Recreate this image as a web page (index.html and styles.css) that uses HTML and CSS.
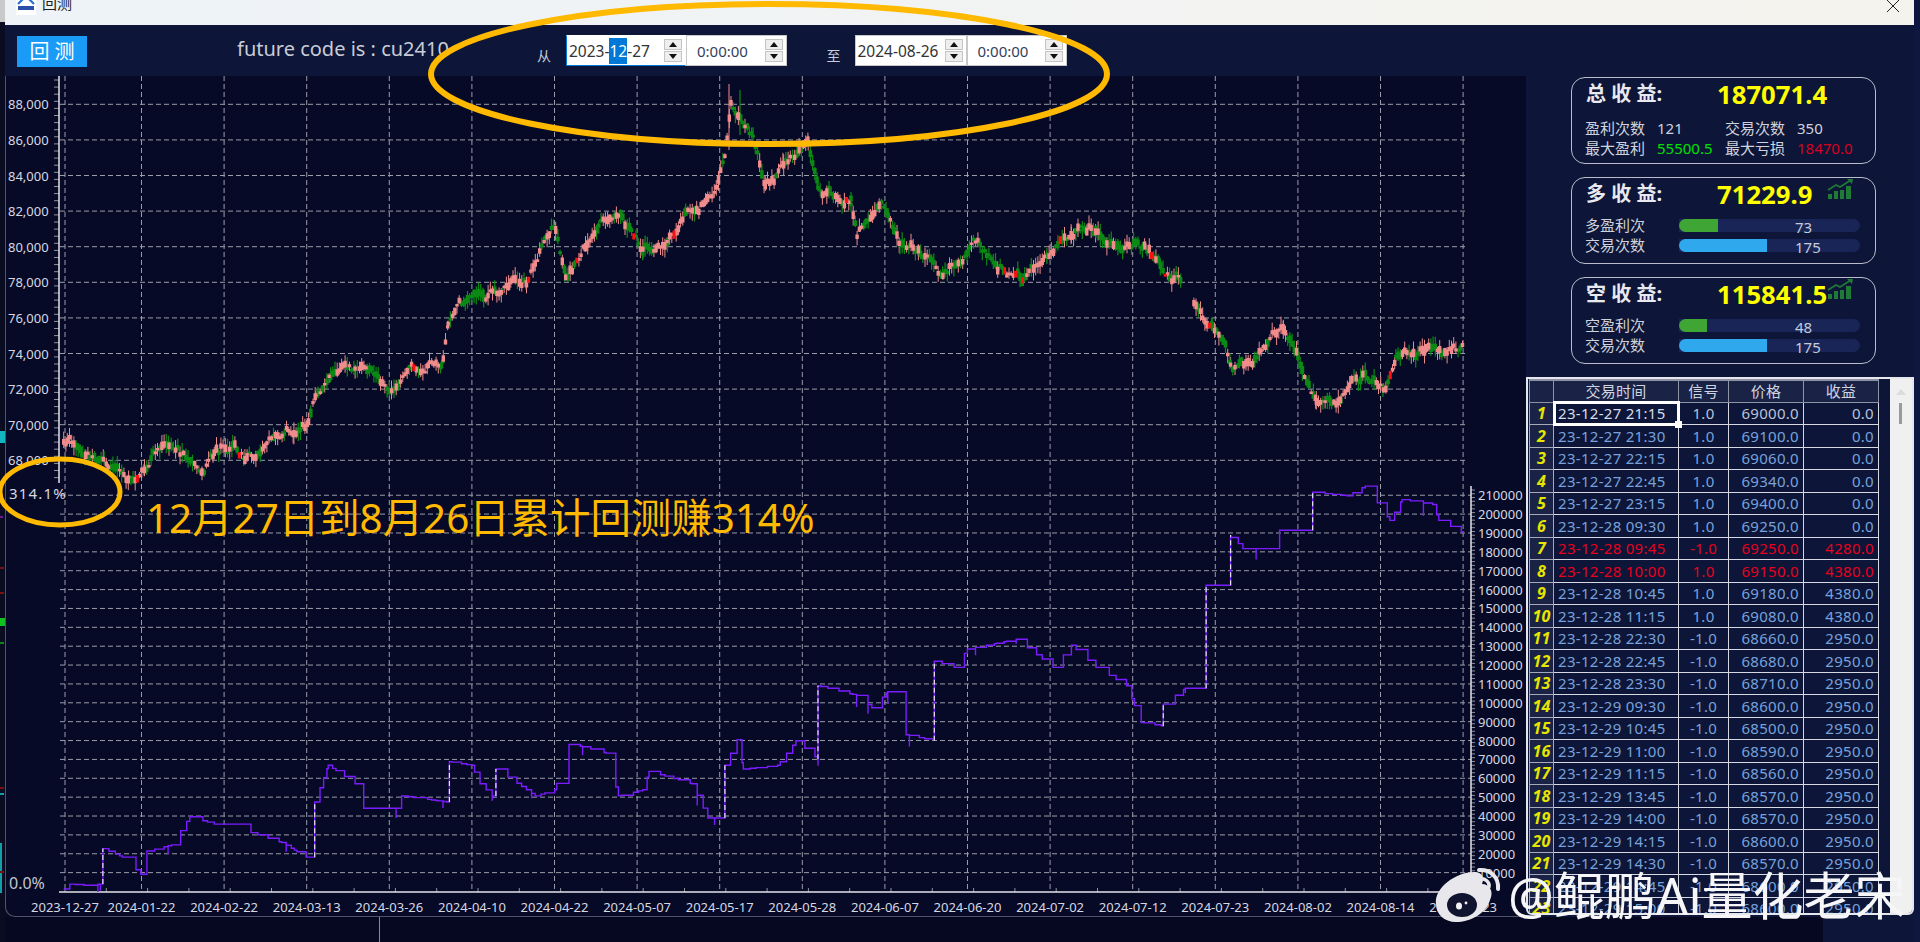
FILE: index.html
```html
<!DOCTYPE html>
<html lang="zh-CN">
  <head>
    <meta charset="UTF-8" />
    <title>回测</title>
    <link rel="stylesheet" href="styles.css">
  </head>
  <body>
    <div class="page">
      <svg class="edge-left" viewBox="0 0 5 942">
        <rect x="0" y="0" width="5" height="22" fill="#c9c9c9" />
        <rect x="0" y="431" width="5" height="12" fill="#12b5c0" />
        <rect x="0" y="516" width="3" height="2" fill="#6a1a90" />
        <rect x="0" y="567" width="4" height="2" fill="#7a1010" />
        <rect x="0" y="592" width="4" height="2" fill="#7a1010" />
        <rect x="0" y="618" width="5" height="8" fill="#10c020" />
        <rect x="0" y="642" width="4" height="2" fill="#0a8a14" />
        <rect x="0" y="787" width="4" height="2" fill="#7a1010" />
        <rect x="0" y="793" width="4" height="2" fill="#12a0a8" />
        <rect x="0" y="843" width="2" height="50" fill="#12a0a8" />
        <rect x="0" y="871" width="4" height="2" fill="#7a1010" />
      </svg>

      <div class="window">
        <div class="titlebar">
          <svg class="app-icon" viewBox="0 0 20 20">
            <rect width="20" height="20" fill="#fff" />
            <path d="M2 9 L10 1 L18 9" fill="none" stroke="#2f6fd0" stroke-width="2.2" />
            <rect x="2" y="11" width="16" height="4" fill="#2a4fa8" />
          </svg>
          <span class="app-title">回测</span>
          <svg class="close-icon" viewBox="0 0 12 12">
            <path d="M0 0 L12 12 M12 0 L0 12" stroke="#222" stroke-width="1" />
          </svg>
        </div>

        <div class="content">
          <div class="main">
            <div class="toolbar">
              <button class="run-button">回 测</button>
              <span class="code-label">future code is : cu2410</span>
              <span class="range-label range-from">从</span>
              <div class="field field-date field-focus">
                <span>2023-<em>12</em>-27</span>
                <div class="spin"><i class="up"></i><i class="down"></i></div>
              </div>
              <div class="field field-time">
                <span>0:00:00</span>
                <div class="spin"><i class="up"></i><i class="down"></i></div>
              </div>
              <span class="range-label range-to">至</span>
              <div class="field field-date">
                <span>2024-08-26</span>
                <div class="spin"><i class="up"></i><i class="down"></i></div>
              </div>
              <div class="field field-time">
                <span>0:00:00</span>
                <div class="spin"><i class="up"></i><i class="down"></i></div>
              </div>
            </div>
            <div class="chart">
              <svg id="chart" viewBox="5 76 1521 841"></svg>
            </div>
          </div>

          <div class="side">
            <div class="card">
              <div class="card-head">
                <span class="card-title">总 收 益:</span>
                <span class="card-value">187071.4</span>
              </div>
              <div class="stats">
                <span>盈利次数</span><span>121</span><span>交易次数</span><span>350</span>
                <span>最大盈利</span><span class="gain">55500.5</span><span>最大亏损</span><span class="loss">18470.0</span>
              </div>
            </div>

            <div class="card">
              <div class="card-head">
                <span class="card-title">多 收 益:</span>
                <span class="card-value">71229.9</span>
                <svg class="trend-icon" viewBox="0 0 27 22">
                  <path d="M1 20h4v-5H1zM7 20h4v-8H7zM13 20h4v-9h-4zM19 20h5V7h-5z" fill="#1f7a36" />
                  <path d="M1 11 L9 6 L13 8 L24 1" fill="none" stroke="#1f7a36" stroke-width="1.6" />
                  <path d="M20 0 L26 0 L25 5 Z" fill="#1f7a36" />
                </svg>
              </div>
              <div class="bars">
                <span>多盈利次</span>
                <div class="bar"><div class="fill fill-green" style="width: 39px"></div><b class="bar-num">73</b></div>
                <span>交易次数</span>
                <div class="bar"><div class="fill fill-blue" style="width: 88px"></div><b class="bar-num">175</b></div>
              </div>
            </div>

            <div class="card">
              <div class="card-head">
                <span class="card-title">空 收 益:</span>
                <span class="card-value">115841.5</span>
                <svg class="trend-icon" viewBox="0 0 27 22">
                  <path d="M1 20h4v-5H1zM7 20h4v-8H7zM13 20h4v-9h-4zM19 20h5V7h-5z" fill="#1f7a36" />
                  <path d="M1 11 L9 6 L13 8 L24 1" fill="none" stroke="#1f7a36" stroke-width="1.6" />
                  <path d="M20 0 L26 0 L25 5 Z" fill="#1f7a36" />
                </svg>
              </div>
              <div class="bars">
                <span>空盈利次</span>
                <div class="bar"><div class="fill fill-green" style="width: 28px"></div><b class="bar-num">48</b></div>
                <span>交易次数</span>
                <div class="bar"><div class="fill fill-blue" style="width: 88px"></div><b class="bar-num">175</b></div>
              </div>
            </div>

            <div class="trades">
              <table>
                <thead>
                  <tr><th class="num"></th><th class="c-time">交易时间</th><th class="c-sig">信号</th><th class="c-price">价格</th><th class="c-pnl">收益</th></tr>
                </thead>
                <tbody>
                  <tr><th>1</th><td class="selected">23-12-27 21:15<i class="handle"></i></td><td class="mid first">1.0</td><td class="first">69000.0</td><td class="first">0.0</td></tr>
                  <tr><th>2</th><td>23-12-27 21:30</td><td class="mid">1.0</td><td>69100.0</td><td>0.0</td></tr>
                  <tr><th>3</th><td>23-12-27 22:15</td><td class="mid">1.0</td><td>69060.0</td><td>0.0</td></tr>
                  <tr><th>4</th><td>23-12-27 22:45</td><td class="mid">1.0</td><td>69340.0</td><td>0.0</td></tr>
                  <tr><th>5</th><td>23-12-27 23:15</td><td class="mid">1.0</td><td>69400.0</td><td>0.0</td></tr>
                  <tr><th>6</th><td>23-12-28 09:30</td><td class="mid">1.0</td><td>69250.0</td><td>0.0</td></tr>
                  <tr class="red"><th>7</th><td>23-12-28 09:45</td><td class="mid">-1.0</td><td>69250.0</td><td>4280.0</td></tr>
                  <tr class="red"><th>8</th><td>23-12-28 10:00</td><td class="mid">1.0</td><td>69150.0</td><td>4380.0</td></tr>
                  <tr><th>9</th><td>23-12-28 10:45</td><td class="mid">1.0</td><td>69180.0</td><td>4380.0</td></tr>
                  <tr><th>10</th><td>23-12-28 11:15</td><td class="mid">1.0</td><td>69080.0</td><td>4380.0</td></tr>
                  <tr><th>11</th><td>23-12-28 22:30</td><td class="mid">-1.0</td><td>68660.0</td><td>2950.0</td></tr>
                  <tr><th>12</th><td>23-12-28 22:45</td><td class="mid">-1.0</td><td>68680.0</td><td>2950.0</td></tr>
                  <tr><th>13</th><td>23-12-28 23:30</td><td class="mid">-1.0</td><td>68710.0</td><td>2950.0</td></tr>
                  <tr><th>14</th><td>23-12-29 09:30</td><td class="mid">-1.0</td><td>68600.0</td><td>2950.0</td></tr>
                  <tr><th>15</th><td>23-12-29 10:45</td><td class="mid">-1.0</td><td>68500.0</td><td>2950.0</td></tr>
                  <tr><th>16</th><td>23-12-29 11:00</td><td class="mid">-1.0</td><td>68590.0</td><td>2950.0</td></tr>
                  <tr><th>17</th><td>23-12-29 11:15</td><td class="mid">-1.0</td><td>68560.0</td><td>2950.0</td></tr>
                  <tr><th>18</th><td>23-12-29 13:45</td><td class="mid">-1.0</td><td>68570.0</td><td>2950.0</td></tr>
                  <tr><th>19</th><td>23-12-29 14:00</td><td class="mid">-1.0</td><td>68570.0</td><td>2950.0</td></tr>
                  <tr><th>20</th><td>23-12-29 14:15</td><td class="mid">-1.0</td><td>68600.0</td><td>2950.0</td></tr>
                  <tr><th>21</th><td>23-12-29 14:30</td><td class="mid">-1.0</td><td>68570.0</td><td>2950.0</td></tr>
                  <tr><th>22</th><td>23-12-29 14:45</td><td class="mid">-1.0</td><td>68600.0</td><td>2950.0</td></tr>
                  <tr><th>23</th><td>23-12-29 15:00</td><td class="mid">-1.0</td><td>68600.0</td><td>2950.0</td></tr>
                </tbody>
              </table>
              <div class="scrollbar"><i class="scroll-up"></i><i class="scroll-thumb"></i></div>
            </div>
          </div>
        </div>

        <div class="footer"><i class="stray-line"></i><i class="footer-right"></i></div>
      </div>

      <div class="edge-right"></div>

      <!-- marks drawn over the screenshot -->
      <svg class="overlay" viewBox="0 0 1920 942">
        <ellipse cx="769" cy="74" rx="338" ry="70" fill="none" stroke="#ffb900" stroke-width="6" />
        <ellipse cx="60" cy="492" rx="60" ry="33" fill="none" stroke="#ffb900" stroke-width="5" />
        <g class="weibo">
          <path d="M1436 904 C1434 888 1456 872 1474 872 C1484 872 1484 880 1482 884 C1490 884 1494 892 1490 900 C1486 914 1470 922 1456 922 C1444 922 1436 914 1436 904 Z" fill="#e8e8ec" />
          <ellipse cx="1462" cy="905" rx="15" ry="12" fill="#10142e" />
          <ellipse cx="1459" cy="906" rx="3" ry="3.5" fill="#f4f4f6" />
          <circle cx="1466" cy="903" r="1.4" fill="#f4f4f6" />
          <path d="M1479 870 C1490 869 1499 877 1498 889" fill="none" stroke="#e8e8ec" stroke-width="4" stroke-linecap="round" />
          <path d="M1480 879 C1485 878 1490 882 1489 887" fill="none" stroke="#e8e8ec" stroke-width="3.5" stroke-linecap="round" />
        </g>
      </svg>
      <div class="note">12月27日到8月26日累计回测赚314%</div>
      <div class="watermark">@鲲鹏Ai量化老宋</div>
    </div>
    <script src="chart.js"></script>
  </body>
</html>
```

FILE: styles.css
```css
* {
  box-sizing: border-box;
}
body {
  margin: 0;
  background: #0a0d22;
  font-family: "Noto Sans", "Noto Sans CJK SC", sans-serif;
}
.page {
  position: relative;
  display: flex;
  width: 1920px;
  height: 942px;
  overflow: hidden;
}
.edge-left {
  width: 5px;
  height: 942px;
  flex: none;
  background: #0a0d22;
}
.edge-right {
  width: 6px;
  flex: none;
  background: #0e1740;
}
.window {
  flex: 1;
  display: flex;
  flex-direction: column;
}

.titlebar {
  height: 25px;
  flex: none;
  display: flex;
  align-items: flex-start;
  background: linear-gradient(90deg, #eef3f8, #f5f3ee);
  overflow: hidden;
}
.app-icon {
  width: 20px;
  height: 20px;
  margin: -5px 0 0 11px;
}
.app-title {
  margin: -8px 0 0 6px;
  font-size: 15px;
  line-height: 22px;
  color: #222;
}
.close-icon {
  width: 12px;
  height: 12px;
  margin: 0 15px 0 auto;
}

.content {
  height: 892px;
  flex: none;
  display: flex;
}
.main {
  width: 1521px;
  flex: none;
  display: flex;
  flex-direction: column;
}

.toolbar {
  height: 51px;
  flex: none;
  display: flex;
  align-items: flex-start;
  padding: 10px 0 0 12px;
  background: #0d1638;
}
.run-button {
  width: 70px;
  height: 31px;
  margin-top: 1px;
  padding: 0;
  border: none;
  background: #1a9bf7;
  color: #fff;
  font-family: inherit;
  font-size: 20px;
  line-height: 28px;
}
.code-label {
  width: 215px;
  margin-left: 150px;
  font-size: 20px;
  line-height: 28px;
  color: #c9ccd6;
  white-space: nowrap;
}
.range-label {
  margin-top: 11px;
  font-size: 14px;
  line-height: 20px;
  color: #c9ccd6;
}
.range-from {
  margin-left: 85px;
}
.range-to {
  margin-left: 40px;
}
.field {
  height: 31px;
  margin-top: 0;
  display: flex;
  align-items: center;
  justify-content: space-between;
  background: #fff;
  border: 1px solid #c8c8c8;
  color: #333;
  font-size: 15.5px;
}
.field-date {
  width: 112px;
  margin-left: 14px;
  padding: 0 3px 0 2px;
}
.field-focus {
  width: 120px;
  margin-left: 15px;
  border-color: #fff #fff #0078d7 #0078d7;
}
.field-time {
  width: 100.5px;
  padding: 0 3px 0 10px;
  font-size: 15px;
  color: #33415c;
}
.field em {
  font-style: normal;
  background: #0078d7;
  color: #fff;
  padding: 2px 0;
}
.spin {
  display: flex;
  flex-direction: column;
  gap: 1px;
}
.spin i {
  width: 18px;
  height: 11px;
  display: flex;
  align-items: center;
  justify-content: center;
  background: #eeeeee;
  border: 1px solid #c4c4c4;
}
.spin i::after {
  content: "";
  border-left: 4px solid transparent;
  border-right: 4px solid transparent;
}
.spin .up::after {
  border-bottom: 5px solid #111;
}
.spin .down::after {
  border-top: 5px solid #111;
}

.chart {
  height: 841px;
  flex: none;
  background: #070a26;
  border-left: 1px solid #50546a;
  border-bottom: 1px solid #50546a;
  border-bottom-left-radius: 10px;
  overflow: hidden;
}
.chart svg {
  display: block;
  width: 1521px;
  height: 841px;
  margin-left: -1px;
}
.chart text {
  font-family: "Noto Sans", sans-serif;
  font-size: 13px;
  fill: #d6d8e2;
}
.chart text.pct {
  font-size: 15px;
  letter-spacing: 1.2px;
}
.chart text.zero {
  font-size: 16px;
  fill: #c4c6d0;
  letter-spacing: 0;
}

.side {
  flex: 1;
  display: flex;
  flex-direction: column;
  padding: 52px 0 2px 0;
  background: #0d1638;
}
.card {
  width: 305px;
  height: 87px;
  flex: none;
  margin: 0 0 13px 45px;
  padding: 2px 0 0 14px;
  border: 1.5px solid #b9bdcb;
  border-radius: 14px;
  color: #cfd2dc;
}
.card-head {
  position: relative;
  display: flex;
  align-items: center;
  height: 34px;
  margin-top: -2px;
}
.card-title {
  width: 131px;
  flex: none;
  margin-top: -5px;
  font-size: 20px;
  font-weight: 700;
  color: #e8eaf0;
}
.card-value {
  margin-top: -2px;
  font-size: 25.7px;
  font-weight: 700;
  color: #ffff00;
}
.trend-icon {
  position: absolute;
  left: 241px;
  top: 1px;
  width: 27px;
  height: 22px;
}
.stats {
  display: grid;
  grid-template-columns: 72px 68px 72px 70px;
  margin-top: 6px;
  margin-left: -1px;
  font-size: 15px;
  line-height: 20px;
}
.gain {
  color: #00e000;
}
.loss {
  color: #d80020;
}
.bars {
  display: grid;
  grid-template-columns: 94px 181px;
  row-gap: 7px;
  margin-top: 7px;
  margin-left: -1px;
  font-size: 15px;
  line-height: 13px;
  align-items: center;
}
.bar {
  position: relative;
  height: 13px;
  background: #1a2557;
  border-radius: 0 7px 7px 0;
}
.fill {
  height: 13px;
  border-radius: 7px 0 0 7px;
}
.fill-green {
  background: #3fa535;
}
.fill-blue {
  background: #2fa8ee;
}
.bar-num {
  position: absolute;
  left: 116px;
  top: 2px;
  font-weight: 400;
  font-size: 15px;
  color: #c4cbdc;
}

.trades {
  flex: 1;
  min-height: 0;
  display: flex;
  justify-content: space-between;
  border: 2px solid #e6e7ec;
  border-radius: 0 0 6px 6px;
  background: #0d1638;
  overflow: hidden;
}
.trades table {
  width: 349px;
  height: max-content;
  margin-left: 1px;
  table-layout: fixed;
  border-collapse: collapse;
  font-size: 15px;
  letter-spacing: 0.3px;
  color: #78a2dc;
}
.trades thead tr {
  height: 22px;
}
.trades tbody tr {
  height: 22.5px;
}
.trades thead th {
  padding: 0;
  background: #1a2346;
  border: 1px solid #8f93a6;
  border-top-width: 2px;
  color: #d0d4e0;
  font-weight: 400;
  line-height: 20px;
}
.trades .num {
  width: 24px;
}
.c-time {
  width: 125px;
}
.c-sig {
  width: 50px;
}
.c-price,
.c-pnl {
  width: 75px;
}
.trades tbody th {
  padding: 0;
  background: #1a2346;
  border: 1px solid #a6a9b8;
  color: #e6e600;
  font-style: italic;
  font-weight: 700;
  font-size: 16px;
  line-height: 20px;
}
.trades td {
  padding: 0 4px;
  border: 1px solid #d6d9e2;
  line-height: 20px;
  text-align: right;
  white-space: nowrap;
}
.trades td:nth-child(2) {
  text-align: left;
}
.trades td.mid {
  text-align: center;
}
.trades .red td {
  color: #e8001c;
}
.trades td.first {
  color: #b9c3d8;
}
.trades td.selected {
  position: relative;
  outline: 3px solid #fff;
  outline-offset: -2px;
  color: #d6dcea;
}
.handle {
  position: absolute;
  right: -4px;
  bottom: -4px;
  width: 7px;
  height: 7px;
  background: #fff;
}
.scrollbar {
  position: relative;
  width: 22px;
  flex: none;
  background: #f0f0f0;
}
.scroll-up {
  position: absolute;
  left: 6px;
  top: 10px;
  border-left: 5px solid transparent;
  border-right: 5px solid transparent;
  border-bottom: 6px solid #dcdcdc;
}
.scroll-thumb {
  position: absolute;
  left: 9px;
  top: 24px;
  width: 3px;
  height: 21px;
  background: #9a9a9a;
}

.footer {
  position: relative;
  height: 25px;
  flex: none;
  background: #050820;
}
.stray-line {
  position: absolute;
  left: 374px;
  top: 0;
  width: 1px;
  height: 25px;
  background: #8a8a8a;
}
.footer-right {
  position: absolute;
  right: 0;
  top: 0;
  width: 91px;
  height: 25px;
  background: #0d1638;
}

.overlay {
  position: absolute;
  left: 0;
  top: 0;
  width: 1920px;
  height: 942px;
  pointer-events: none;
}
.note {
  position: absolute;
  left: 146px;
  top: 490px;
  font-size: 40.4px;
  line-height: 56px;
  color: #ffb900;
  white-space: nowrap;
}
.watermark {
  position: absolute;
  left: 1508px;
  top: 860px;
  font-size: 51px;
  line-height: 70px;
  color: #f6f6f8;
  white-space: nowrap;
}
```

FILE: chart.js
```js
const svg = document.querySelector("#chart");

// small seeded random so the picture is the same on every load
let seed = 20231227;
function rnd() {
  seed = (seed * 1664525 + 1013904223) % 4294967296;
  return seed / 4294967296;
}

const SCALE = 1.2245;
const priceParts = [
  [[52,360],[55,357],[70,372],[85,381],[105,387],[118,380],[125,368],[138,358],[150,372],[165,382],[175,372],[190,362],[200,372],[225,360],[240,353],[252,350],
   [258,325],[270,305],[280,295],[290,305],[300,300],[320,315],[340,305],[362,290],[366,260],[380,245],[395,245],[410,235],[430,230],[445,195],[452,185],[462,225],
   [480,195],[505,170],[525,200],[545,195],[560,170],[585,155],[592,125],[597,85],[603,90],[615,110],[625,148],[640,135],[660,118],[668,155],[695,165],[700,195],
   [720,165],[735,195],[750,205],[770,225],[795,195],[815,220],[835,230],[855,215],[875,190],[895,187],[915,200],[935,205],[948,215],[965,225]],
  [[975,250],[990,270],[1005,300],[1030,290],[1048,268],[1060,295],[1075,335],[1095,332],[1115,305],[1130,318],[1140,295],[1165,288],[1180,292],[1195,288]],
];
const equity = [
  [52,726],[57,722],[70,723],[82,722],[84,693],[100,700],[115,714],[120,695],[140,690],[155,667],[175,673],[205,673],[205,680],[230,688],[250,700],[256,700],[257,655],[268,625],
  [290,640],[297,660],[328,660],[328,650],[365,655],[367,622],[385,625],[392,640],[402,650],[405,628],[430,645],[437,650],[453,645],[465,607],[495,615],[505,650],[525,645],[530,630],
  [565,640],[578,668],[588,668],[592,625],[602,604],[607,628],[635,625],[650,605],[668,620],[668,560],[700,568],[712,578],[725,565],[735,565],[740,600],[763,605],[763,540],[780,545],
  [790,530],[830,522],[860,545],[875,527],[895,545],[920,560],[932,590],[950,593],[950,575],[968,562],[985,562],[985,478],[1002,478],[1005,437],[1015,448],[1045,448],[1045,433],
  [1068,433],[1072,402],[1100,405],[1115,397],[1135,425],[1145,408],[1170,412],[1175,425],[1195,435],
];
const dates = ["2023-12-27","2024-01-22","2024-02-22","2024-03-13","2024-03-26","2024-04-10","2024-04-22","2024-05-07","2024-05-17","2024-05-28","2024-06-07","2024-06-20","2024-07-02","2024-07-12","2024-07-23","2024-08-02","2024-08-14","2024-08-23"];

let out = "";

// grid
let grid = "";
const gridX = [65];
for (let i = 0; i < 17; i++) gridX.push(141.5 + i * 82.6);
gridX.forEach((x) => (grid += `M${x} 76V892`));
for (let i = 0; i <= 10; i++) {
  const y = 104.3 + i * 35.6;
  grid += `M60 ${y}H1466`;
  const price = (88000 - i * 2000).toLocaleString("en-US");
  out += `<text x="8" y="${y + 5}">${price}</text>`;
}
for (let i = 1; i <= 21; i++) {
  const y = 891.5 - i * 18.87;
  grid += `M60 ${y}H1471`;
  out += `<text x="1478" y="${y + 5}">${i * 10000}</text>`;
}
out += `<path d="${grid}" stroke="#9b9da9" stroke-width="1" stroke-dasharray="5 3" fill="none" />`;

// axes with their small ticks
let ticks = "";
for (let y = 80; y < 483; y += 7.1) ticks += `M54 ${y}H59`;
for (let y = 490; y < 891; y += 3.77) ticks += `M1471 ${y}h4`;
for (let x = 65; x < 1470; x += 41.3) ticks += `M${x} 892v-4`;
out += `<path d="${ticks}" stroke="#8f919c" stroke-width="1" fill="none" />`;
out += `<path d="M59 76V483M1471 486V892M59 892H1471" stroke="#e4e4ea" stroke-width="1.5" fill="none" />`;

dates.forEach((d, i) => {
  out += `<text x="${gridX[i]}" y="912" text-anchor="middle">${d}</text>`;
});
out += `<text class="pct" x="9" y="499">314.1%</text>`;
out += `<text class="pct zero" x="9" y="889">0.0%</text>`;

// equity line drawn as uneven steps with a few spikes
let line = "";
let jumps = "";
equity.forEach((p, i) => {
  const x = p[0] * SCALE;
  const y = p[1] * SCALE;
  if (i == 0) {
    line += `M${x} ${y}`;
    return;
  }
  const px = equity[i - 1][0] * SCALE;
  const py = equity[i - 1][1] * SCALE;
  let sx = px;
  while (sx < x - 1) {
    sx = Math.min(x, sx + 2 + rnd() * 12);
    const sy = py + ((y - py) * (sx - px)) / (x - px);
    line += `H${sx.toFixed(1)}V${sy.toFixed(1)}`;
    if (rnd() < 0.1) {
      const spike = 4 + rnd() * 10;
      line += `v${spike.toFixed(1)}v${(-spike).toFixed(1)}`;
    }
  }
  if (x == px) line += `V${y}`;
  if (Math.abs(y - py) > 20 && x - px < 6) jumps += `M${x} ${py}V${y}`;
});
out += `<path d="${line}" stroke="#7a1cff" stroke-width="1.4" fill="none" />`;
out += `<path d="${jumps}" stroke="#e8e4f4" stroke-width="1.2" stroke-dasharray="5 3" fill="none" />`;

// price candles along the waypoints, pink on the way up and green on the way down
let upWick = "", upBody = "", downWick = "", downBody = "", redBody = "";
priceParts.forEach((part) => {
  let drift = 0;
  let slow = 0;
  for (let i = 1; i < part.length; i++) {
    const x0 = part[i - 1][0] * SCALE, y0 = part[i - 1][1] * SCALE;
    const x1 = part[i][0] * SCALE, y1 = part[i][1] * SCALE;
    const upChance = y1 < y0 ? 0.72 : 0.42;
    for (let x = x0; x < x1; x += 2.2) {
      drift = drift * 0.84 + (rnd() - 0.5) * 8;
      slow = slow * 0.95 + (rnd() - 0.5) * 3.5;
      const y = y0 + ((y1 - y0) * (x - x0)) / (x1 - x0) + drift + slow;
      const h = 1.2 + rnd() * 3;
      const top = y - h - rnd() * 8;
      const bottom = y + h + rnd() * 8;
      const pick = rnd();
      const wick = `M${x.toFixed(1)} ${top.toFixed(1)}V${bottom.toFixed(1)}`;
      const body = `M${x.toFixed(1)} ${(y - h).toFixed(1)}V${(y + h).toFixed(1)}`;
      if (pick < 0.015) {
        redBody += body;
      } else if (pick < upChance) {
        upWick += wick;
        upBody += body;
      } else {
        downWick += wick;
        downBody += body;
      }
    }
  }
});
upWick += "M729 84V150";
downWick += "M740 90V135";
out += `<path d="${upWick}" stroke="#f08c8c" stroke-width="1" fill="none" />`;
out += `<path d="${downWick}" stroke="#0a8a14" stroke-width="1.2" fill="none" />`;
out += `<path d="${downBody}" stroke="#0a8a14" stroke-width="3.6" fill="none" />`;
out += `<path d="${upBody}" stroke="#f08c8c" stroke-width="3.4" fill="none" />`;
out += `<path d="${redBody}" stroke="#ff1010" stroke-width="3" fill="none" />`;

svg.innerHTML = out;
```
